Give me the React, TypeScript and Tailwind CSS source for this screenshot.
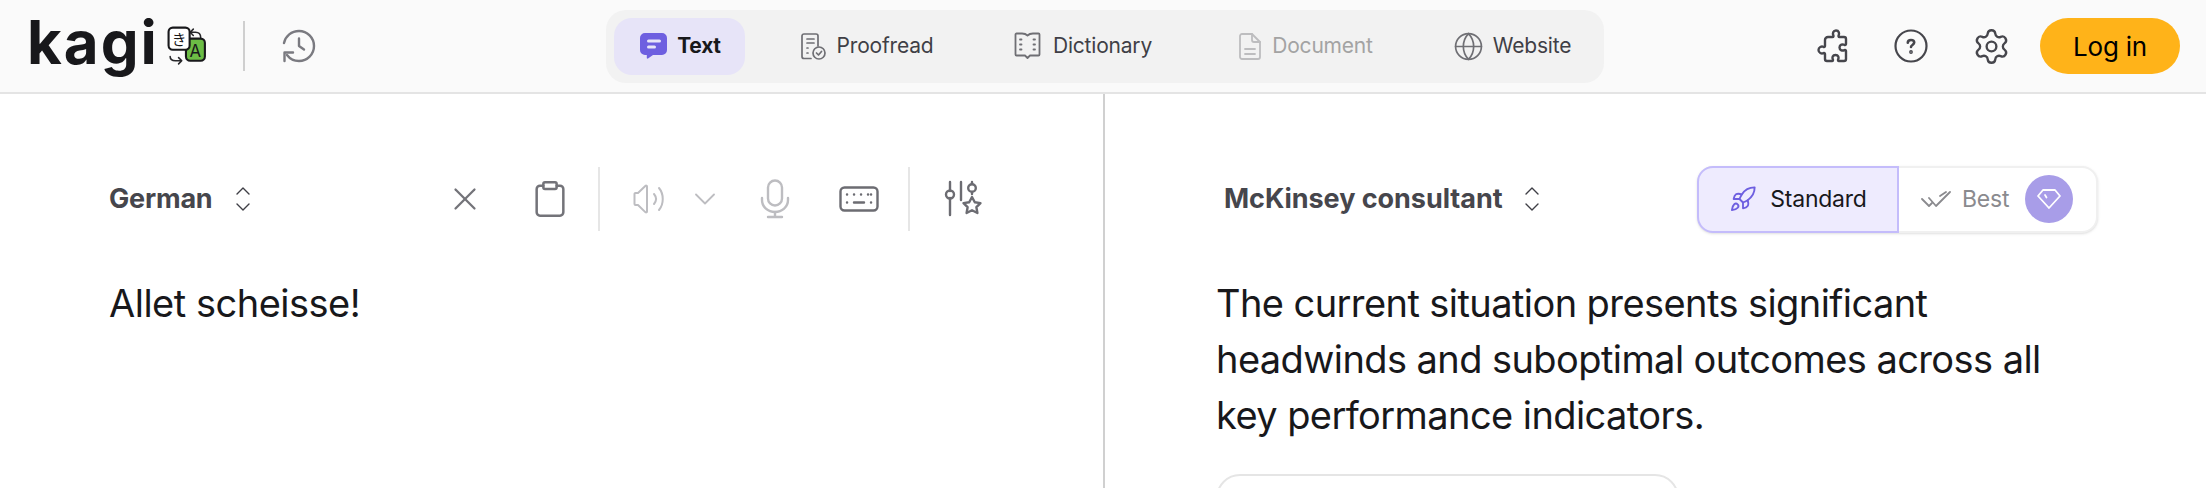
import { Clipboard, Globe, Rocket, Settings, X } from "lucide-react";

const sans = "font-['Inter',sans-serif]";

function Chevrons() {
  return (
    <svg width="16" height="26" viewBox="0 0 16 26" fill="none" stroke="#3f3f46" strokeWidth="1.4" strokeLinecap="round" strokeLinejoin="round">
      <path d="M2 8l6-6 6 6" />
      <path d="M2 18l6 6 6-6" />
    </svg>
  );
}

function LogoMark() {
  return (
    <svg width="40" height="40" viewBox="0 0 38 38" fill="none" strokeLinecap="round" strokeLinejoin="round">
      <path d="M25 3l-3 3 3 3M22 6h5c3 0 5 2 5 5" stroke="#27272a" strokeWidth="1.500" />
      <path d="M11 36l3-3-3-3M14 33H8c-3 0-5-1-5-4" stroke="#27272a" strokeWidth="1.500" />
      <rect x="18" y="12" width="18" height="21" rx="4" fill="#6cbd45" stroke="#18181b" strokeWidth="2" />
      <text x="27" y="29" textAnchor="middle" fontSize="16" fontFamily="Inter, sans-serif" fill="#18181b">A</text>
      <rect x="1.500" y="1.500" width="20" height="21" rx="4" fill="#fff" stroke="#18181b" strokeWidth="2" />
      <text x="11.500" y="18" textAnchor="middle" fontSize="14" fontFamily="'Noto Sans CJK JP', sans-serif" fill="#18181b">き</text>
    </svg>
  );
}

function HistoryIcon() {
  return (
    <svg width="34" height="34" viewBox="0 0 34 34" fill="none" stroke="#7a7a80" strokeWidth="2.400" strokeLinecap="round" strokeLinejoin="round">
      <path d="M2 14C3.500 7 9.500 2 17 2c8.300 0 15 6.700 15 15s-6.700 15-15 15c-5 0-9.300-2.400-12-6" />
      <path d="M2.500 32v-8.500H11" />
      <path d="M17 9.500V17l5 3.500" />
    </svg>
  );
}

function TextTabIcon() {
  return (
    <svg width="27" height="27" viewBox="0 0 27 27">
      <path d="M5 0h17a5 5 0 0 1 5 5v12a5 5 0 0 1-5 5H13l-5 3.500c-.6.400-1.200 0-1.200-.6V22H5a5 5 0 0 1-5-5V5a5 5 0 0 1 5-5z" fill="#6e5fe0" />
      <rect x="7" y="6.500" width="14" height="3" rx="1.500" fill="#e8e5f8" />
      <rect x="7" y="12.500" width="9" height="3" rx="1.500" fill="#e8e5f8" />
    </svg>
  );
}

function ProofreadIcon() {
  return (
    <svg width="25" height="27" viewBox="0 0 25 27" fill="none" stroke="#6f6f74" strokeWidth="1.700" strokeLinecap="round" strokeLinejoin="round">
      <path d="M10 25.500H3a2 2 0 0 1-2-2V3a2 2 0 0 1 2-2h12a2 2 0 0 1 2 2v10" />
      <path d="M6 6h7M6 10h7M6 15h1M6 20h1" />
      <circle cx="18" cy="20" r="6" />
      <path d="M15.500 20l2 2 3-3.500" />
    </svg>
  );
}

function DictionaryIcon() {
  return (
    <svg width="27" height="28" viewBox="0 0 27 28" fill="none" stroke="#6f6f74" strokeWidth="1.800" strokeLinecap="round" strokeLinejoin="round">
      <path d="M13.500 3.500C12 2 10 1.500 8 1.500H2.500a1 1 0 0 0-1 1v20a1 1 0 0 0 1 1H11l2.500 2.500 2.500-2.500h8.500a1 1 0 0 0 1-1v-20a1 1 0 0 0-1-1H19c-2 0-4 .5-5.500 2z" />
      <path d="M6 7.500h1.500M6 12.500h1.500M6 17.500h1.500M19.500 7.500H21M19.500 12.500H21M19.500 17.500H21" />
    </svg>
  );
}

function DocumentIcon() {
  return (
    <svg width="22" height="27" viewBox="0 0 22 27" fill="none" stroke="#bdbdbf" strokeWidth="1.800" strokeLinecap="round" strokeLinejoin="round">
      <path d="M3 1h10l8 8v15a2 2 0 0 1-2 2H3a2 2 0 0 1-2-2V3a2 2 0 0 1 2-2z" />
      <path d="M13 1v6a2 2 0 0 0 2 2h6" />
      <path d="M6 16h10M6 21h10" />
    </svg>
  );
}

function PuzzleIcon() {
  return (
    <svg width="34" height="34" viewBox="0 0 34 34" fill="none" stroke="#46464c" strokeWidth="2.400" strokeLinecap="round" strokeLinejoin="round">
      <path d="M11 8h4.500c1 0 1.200-.8.800-1.700C15.500 4.700 16 1.500 19 1.500s3.500 3 2.700 4.800c-.4.900-.2 1.700.8 1.700H27a2 2 0 0 1 2 2v5c0 1-.8 1.200-1.700.8-1.600-.8-4.800-.3-4.800 2.700s3.200 3.500 4.800 2.700c.9-.4 1.700-.2 1.700.8V30a2 2 0 0 1-2 2h-5c-1 0-1.200-.8-.8-1.700.8-1.600.3-4.300-2.700-4.300s-3.500 2.700-2.700 4.300c.4.900.2 1.700-.8 1.700H10a2 2 0 0 1-2-2v-5c0-1-.8-1.200-1.700-.8C4.700 25 1.500 24 1.500 21s3.200-4 4.800-3.200c.9.400 1.700.2 1.700-.8v-6a3 3 0 0 1 3-3z" />
    </svg>
  );
}

function HelpIcon() {
  return (
    <svg width="34" height="34" viewBox="0 0 34 34" fill="none" stroke="#46464c" strokeWidth="2.200" strokeLinecap="round" strokeLinejoin="round">
      <circle cx="17" cy="17" r="15.500" />
      <path d="M13.800 13.800c0-1.800 1.400-2.800 3.200-2.800s3.200 1 3.200 2.600c0 2.400-3.200 2.400-3.200 4.400" strokeWidth="2.600" />
      <circle cx="17" cy="23" r=".7" strokeWidth="2.400" />
    </svg>
  );
}

function SpeakerIcon() {
  return (
    <svg width="34" height="30" viewBox="0 0 34 30" fill="none" stroke="#bdbdc1" strokeWidth="2" strokeLinecap="round" strokeLinejoin="round">
      <path d="M14 2.500v25c0 1-1 1.200-1.700.6L5 21H2.500a1 1 0 0 1-1-1V10a1 1 0 0 1 1-1H5l7.300-7c.7-.6 1.700-.5 1.700.5z" />
      <path d="M21 10c2.500 3 2.500 7 0 10" />
      <path d="M26 4c5 6 5 16 0 22" />
    </svg>
  );
}

function MicIcon() {
  return (
    <svg width="30" height="40" viewBox="0 0 30 40" fill="none" stroke="#bdbdc1" strokeWidth="2.400" strokeLinecap="round" strokeLinejoin="round">
      <rect x="8" y="1.500" width="14" height="25" rx="7" />
      <path d="M2 19v2c0 7 6 12 13 12s13-5 13-12v-2" />
      <path d="M15 33v5M8 38h14" />
    </svg>
  );
}

function KeyboardIcon() {
  return (
    <svg width="40" height="26" viewBox="0 0 40 26" fill="none" stroke="#6c6c72" strokeWidth="2.400" strokeLinecap="round" strokeLinejoin="round">
      <rect x="1.500" y="1.500" width="37" height="23" rx="4" />
      <path d="M8 8.500h.1M15 8.500h.1M22 8.500h.1M29 8.500h.1M32 8.500h.1M8 16.500h.1M32 16.500h.1M15 16.500h10" />
    </svg>
  );
}

function FilterStarIcon() {
  return (
    <svg width="38" height="38" viewBox="0 0 38 38" fill="none" stroke="#6c6c72" strokeWidth="2.400" strokeLinecap="round" strokeLinejoin="round">
      <path d="M6 2v9M6 18v17" />
      <circle cx="6" cy="14.500" r="4" />
      <path d="M17 2v18" />
      <path d="M28 2v2M28 12v2" />
      <circle cx="28" cy="8" r="3.800" />
      <path d="M28 17l2.800 5.200 5.700.9-4.100 4.100 1 5.800-5.400-2.700-5.400 2.700 1-5.800-4.100-4.100 5.700-.9z" />
    </svg>
  );
}

function DoubleCheck() {
  return (
    <svg width="30" height="20" viewBox="0 0 30 20" fill="none" stroke="#8a8a8e" strokeWidth="1.800" strokeLinecap="round" strokeLinejoin="round">
      <path d="M1 10l7 7 3-3" />
      <path d="M8 9l7 8L29 3" />
      <path d="M19 7l6-4" />
    </svg>
  );
}

function Gem() {
  return (
    <svg width="24" height="20" viewBox="0 0 24 20" fill="none" stroke="#fff" strokeWidth="1.800" strokeLinecap="round" strokeLinejoin="round">
      <path d="M6 1h12l5 6-11 12L1 7z" />
      <path d="M8 6l1.500 2.500" />
    </svg>
  );
}

const tabs = [
  { label: "Proofread", icon: <ProofreadIcon />, cls: "w-[184px] gap-[11px]", text: "text-[#3f3f46]" },
  { label: "Dictionary", icon: <DictionaryIcon />, cls: "w-[188px] gap-[12px]", text: "text-[#3f3f46]" },
  { label: "Document", icon: <DocumentIcon />, cls: "w-[198px] gap-[11px]", text: "text-[#a3a3a3]" },
  { label: "Website", icon: <Globe size={31} strokeWidth={1.3} color="#6f6f74" />, cls: "-ml-[8px] w-[170px] gap-[9px]", text: "text-[#3f3f46]" },
];

export default function App() {
  return (
    <div className={`${sans} h-[488px] w-[2206px] overflow-hidden bg-white text-[#18181b]`}>
      {/* Header */}
      <header className="flex h-[94px] items-center border-b-2 border-[#e4e4e4] bg-[#fafafa] pl-[28px] pr-[26px]">
        <div className="flex w-[578px] items-center">
          <span className="-ml-[1px] -mt-2 w-[131px] text-[60px] leading-none font-bold tracking-[2px] text-[#18181b]">kagi</span>
          <span className="ml-[9px]"><LogoMark /></span>
          <div className="ml-[36px] h-[50px] w-[2px] bg-[#cfcfcf]" />
          <span className="ml-[37px]"><HistoryIcon /></span>
        </div>

        <nav className="flex h-[73px] w-[998px] items-center gap-[30px] rounded-[20px] bg-[#f2f2f2] pl-[8px]">
          <div className="flex h-[57px] w-[131px] items-center justify-center gap-[10px] rounded-[18px] bg-[#e7e4f8] pl-[2px]">
            <TextTabIcon />
            <span className="text-[21px] font-bold tracking-[-0.3px]">Text</span>
          </div>
          {tabs.map((t) => (
            <div key={t.label} className={`flex h-[57px] items-center justify-center ${t.cls}`}>
              {t.icon}
              <span className={`text-[21px] tracking-[-0.2px] ${t.text}`}>{t.label}</span>
            </div>
          ))}
        </nav>

        <div className="ml-auto flex items-center">
          <span className="mr-[-1px]"><PuzzleIcon /></span>
          <span className="ml-[44px]"><HelpIcon /></span>
          <Settings size={39} strokeWidth={1.45} color="#46464c" className="ml-[44px]" />
          <button className="ml-[29px] h-[56px] w-[140px] rounded-full bg-[#ffb319] text-[26px] tracking-[-0.2px] text-black">Log in</button>
        </div>
      </header>

      <main className="flex h-[394px]">
        {/* Source */}
        <section className="w-[1105px] border-r-2 border-[#d0d0d0] pl-[109px]">
          <div className="mt-[72px] flex h-[66px] items-center">
            <span className="w-[105px] text-[27px] font-bold tracking-[-0.2px] text-[#46464c]">German</span>
            <span className="ml-[21px]"><Chevrons /></span>
            <X size={38} strokeWidth={1.4} color="#737379" className="ml-[195px]" />
            <Clipboard size={40} strokeWidth={1.5} color="#737379" className="ml-[46px]" />
            <div className="ml-[28px] h-[64px] w-[2px] bg-[#e6e6e6]" />
            <span className="ml-[33px]"><SpeakerIcon /></span>
            <svg className="ml-[28px]" width="20" height="12" viewBox="0 0 20 12" fill="none" stroke="#bdbdc1" strokeWidth="1.800" strokeLinecap="round" strokeLinejoin="round">
              <path d="M1 1.500l9 9 9-9" />
            </svg>
            <span className="ml-[45px]"><MicIcon /></span>
            <span className="ml-[49px]"><KeyboardIcon /></span>
            <div className="ml-[29px] h-[64px] w-[2px] bg-[#e6e6e6]" />
            <span className="ml-[34px]"><FilterStarIcon /></span>
          </div>
          <p className="mt-[43px] text-[38px] leading-[56px] tracking-[-0.5px]">Allet scheisse!</p>
        </section>

        {/* Result */}
        <section className="flex-1 pl-[111px] pr-[108px]">
          <div className="mt-[72px] flex h-[66px] items-center">
            <span className="ml-[8px] text-[27px] font-bold tracking-[-0.05px] text-[#46464c]">McKinsey consultant</span>
            <span className="ml-[21px]"><Chevrons /></span>
            <div className="ml-auto flex h-[67px] w-[401px] rounded-[16px] border-2 border-[#f0f0f0] bg-white shadow-sm">
              <div className="-m-[2px] flex w-[202px] items-center justify-center gap-[13px] rounded-l-[16px] border-2 border-[#c4bcfb] bg-[#eeebfe]">
                <Rocket size={28} strokeWidth={1.6} color="#6e5fe0" />
                <span className="text-[23px] tracking-[-0.25px]">Standard</span>
              </div>
              <div className="flex flex-1 items-center pl-[24px]">
                <DoubleCheck />
                <span className="ml-[11px] text-[23px] tracking-[-0.2px] text-[#8a8a8e]">Best</span>
                <span className="ml-[16px] flex h-[48px] w-[48px] items-center justify-center rounded-full bg-[#a89de8]"><Gem /></span>
              </div>
            </div>
          </div>
          <p className="mt-[43px] w-[830px] text-[38px] leading-[56px] tracking-[-0.58px]">
            The current situation presents significant headwinds and suboptimal outcomes across all key performance indicators.
          </p>
          <div className="mt-[31px] h-[80px] w-[463px] rounded-[24px] border-2 border-[#e5e5e5]" />
        </section>
      </main>
    </div>
  );
}
